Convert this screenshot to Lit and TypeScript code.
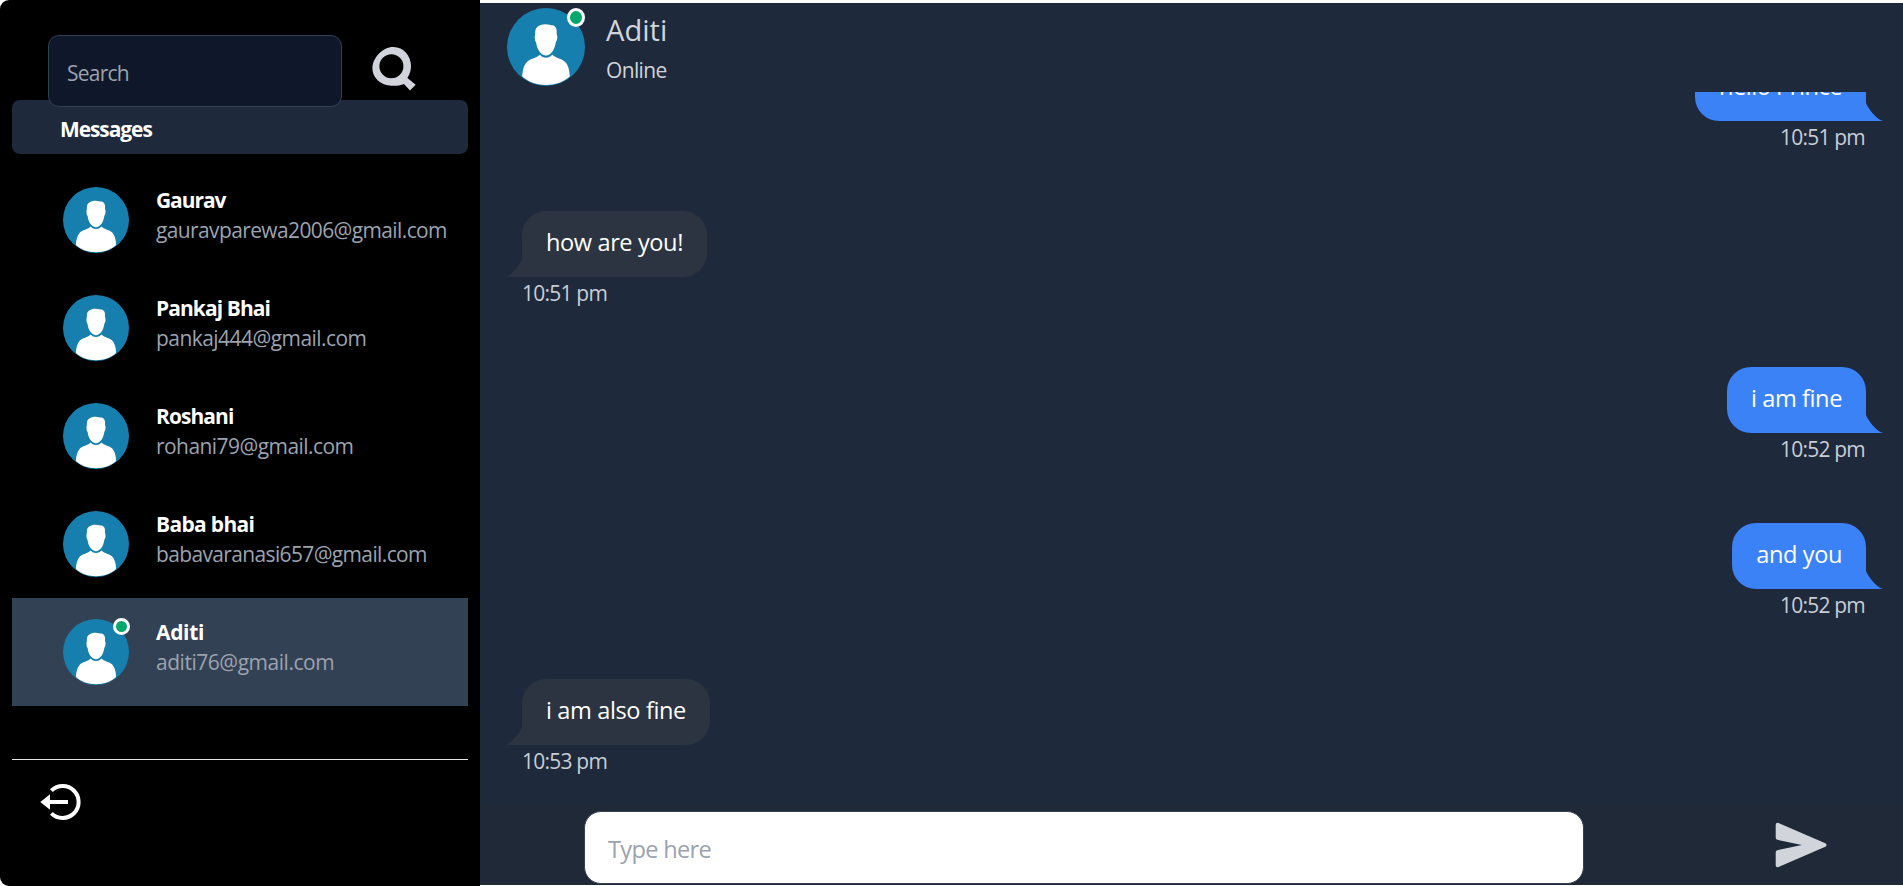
import { LitElement, html, css, svg, nothing } from 'lit';
import { customElement, property } from 'lit/decorators.js';
import { classMap } from 'lit/directives/class-map.js';
import { styleMap } from 'lit/directives/style-map.js';

interface Contact {
  name: string;
  email: string;
  nameTracking: number;
  emailTracking: number;
  online?: boolean;
}

interface Message {
  text: string;
  time: string;
  mine: boolean;
  tracking: number;
}

const contacts: Contact[] = [
  { name: 'Gaurav', email: 'gauravparewa2006@gmail.com', nameTracking: -1.04, emailTracking: -0.59 },
  { name: 'Pankaj Bhai', email: 'pankaj444@gmail.com', nameTracking: -0.9, emailTracking: -0.52 },
  { name: 'Roshani', email: 'rohani79@gmail.com', nameTracking: -0.9, emailTracking: -0.53 },
  { name: 'Baba bhai', email: 'babavaranasi657@gmail.com', nameTracking: -0.65, emailTracking: -0.61 },
  { name: 'Aditi', email: 'aditi76@gmail.com', nameTracking: -0.3, emailTracking: -0.44, online: true },
];

const messages: Message[] = [
  { text: 'hello Prince', time: '10:51 pm', mine: true, tracking: -0.48 },
  { text: 'how are you!', time: '10:51 pm', mine: false, tracking: -0.41 },
  { text: 'i am fine', time: '10:52 pm', mine: true, tracking: -0.42 },
  { text: 'and you', time: '10:52 pm', mine: true, tracking: -0.41 },
  { text: 'i am also fine', time: '10:53 pm', mine: false, tracking: -0.39 },
];

const tracked = (px: number) => styleMap({ letterSpacing: `${px}px` });

@customElement('user-avatar')
class UserAvatar extends LitElement {
  @property({ type: Boolean }) online = false;

  static styles = css`
    :host { display: block; position: relative; width: 66px; height: 66px; flex: none; }
    svg { display: block; width: 100%; height: 100%; }
    .dot {
      position: absolute; top: -1px; right: -1px; box-sizing: border-box;
      width: 17px; height: 17px; border: 3px solid #fff; border-radius: 50%; background: #05a76d;
    }
    :host(.large) { width: 78px; height: 78px; }
    :host(.large) .dot { top: 0; right: 0; width: 18px; height: 19px; }
  `;

  render() {
    return html`
      <svg viewBox="0 0 66 66">
        <circle cx="33" cy="33" r="33" fill="#177fad" />
        <path fill="#fff" d="M23.9 20.5C23.7 16 27.6 13.7 32.6 13.7C35.5 14 36.8 14.5 38.8 14.6C41.6 15.5 42.4 18 42 21.5C42.1 23.3 42.9 23.5 42.5 25.5C42.2 27.5 41.8 28 41.3 29C40.4 35.5 37 40.2 33 40.2C29 40.2 25.3 35.5 24.6 29C23.8 28 23.6 27 23.5 25.3C23.3 23.5 23.9 23 23.9 20.5Z" />
        <path fill="#fff" d="M27.8 39.6C29.2 41.4 31 42.1 33 42.1C35 42.1 36.8 41.4 38.3 39.6C42 43 46 42.6 49.2 45.6C52 48.4 52.9 53 53.1 58C47.5 62.8 40.5 65.2 33 65.2C25.5 65.2 18.5 62.8 12.9 58C13.1 53 14.2 48.4 16.9 45.6C20 42.6 24.2 43 27.8 39.6Z" />
      </svg>
      ${this.online ? html`<span class="dot"></span>` : nothing}
    `;
  }
}

@customElement('contact-row')
class ContactRow extends LitElement {
  @property({ attribute: false }) contact!: Contact;

  static styles = css`
    :host { display: flex; box-sizing: border-box; height: 108px; padding: 19px 0 0 51px; gap: 27px; white-space: nowrap; }
    :host(.active) { background: #334155; }
    user-avatar { margin-top: 2px; }
    .who { font-size: 20.95px; line-height: 30px; }
    .name { font-weight: 700; color: #fff; }
    .email { color: #9ca3af; }
  `;

  render() {
    const c = this.contact;
    return html`
      <user-avatar ?online=${c.online}></user-avatar>
      <div class="who">
        <div class="name" style=${tracked(c.nameTracking)}>${c.name}</div>
        <div class="email" style=${tracked(c.emailTracking)}>${c.email}</div>
      </div>
    `;
  }
}

@customElement('chat-message')
class ChatMessage extends LitElement {
  @property({ attribute: false }) message!: Message;

  static styles = css`
    :host { display: block; }
    .message { display: flex; flex-direction: column; align-items: flex-start; gap: 1px; white-space: nowrap; }
    .message.mine { align-items: flex-end; }
    .bubble {
      position: relative; box-sizing: border-box; height: 66px; padding: 0 24px; line-height: 62px;
      font-size: 23.6px; color: #fff; background: #2b3440; border-radius: 24px 24px 24px 0;
    }
    .mine .bubble { background: #3b82f6; border-radius: 24px 24px 0 24px; }
    .tail { position: absolute; bottom: 0; right: 100%; width: 17px; height: 18px; fill: #2b3440; }
    .mine .tail { right: auto; left: 100%; fill: #3b82f6; }
    .time { font-size: 20.95px; line-height: 30px; letter-spacing: -0.75px; color: #c9ced6; }
    .mine .time { padding-right: 1px; }
  `;

  render() {
    const m = this.message;
    const tail = m.mine
      ? svg`<path d="M-1 0H0C2.5 6 10 16 17 18H-1Z" />`
      : svg`<path d="M18 0H17C14.5 6 7 16 0 18H18Z" />`;
    return html`
      <div class=${classMap({ message: true, mine: m.mine })}>
        <div class="bubble" style=${tracked(m.tracking)}>
          ${m.text}<svg class="tail" viewBox="0 0 17 18">${tail}</svg>
        </div>
        <div class="time">${m.time}</div>
      </div>
    `;
  }
}

@customElement('app-root')
class AppRoot extends LitElement {
  static styles = css`
    :host {
      display: flex; width: 100%; height: 886px; overflow: hidden; background: #fff;
      font-family: 'Open Sans', 'Noto Sans', sans-serif;
    }
    * { box-sizing: border-box; }
    .sidebar {
      width: 480px; flex: none; background: #000; border-radius: 9px 0 0 9px; padding: 35px 12px 0;
      display: flex; flex-direction: column;
    }
    .search { display: flex; padding-left: 36px; gap: 29px; z-index: 1; }
    .search-input {
      width: 294px; height: 72px; border: 1px solid #334155; border-radius: 11px; background: #0f172a;
      padding: 3px 18px 0; font: 20.95px 'Open Sans', sans-serif; letter-spacing: -0.73px; outline: none;
    }
    input::placeholder { color: #9ca3af; opacity: 1; }
    .search-icon { width: 46px; height: 46px; margin-top: 11px; fill: #d1d5db; }
    .heading {
      height: 54px; margin-top: -7px; border-radius: 8px; background: #1e293b; padding: 3px 0 0 48px;
      font-size: 20.95px; line-height: 52px; font-weight: 700; letter-spacing: -1.05px; color: #fff;
    }
    .contacts { padding: 12px 0 53px; }
    .foot { border-top: 1px solid #e5e7eb; padding: 22px 0 0 27px; }
    .logout { display: block; width: 44px; height: 40px; }
    .chat { flex: 1; min-width: 0; height: 882px; margin-top: 3px; display: flex; flex-direction: column; background: #1e293b; }
    .head { height: 89px; flex: none; display: flex; gap: 21px; padding: 5px 0 0 27px; }
    .peer { padding-top: 4px; display: flex; flex-direction: column; gap: 7px; color: #d1d5db; }
    .peer-name { font-size: 29.1px; line-height: 36px; letter-spacing: 0.02px; }
    .peer-state { font-size: 20.95px; line-height: 30px; letter-spacing: -0.61px; }
    .log {
      height: 713px; flex: none; overflow: hidden; display: flex; flex-direction: column; justify-content: flex-end;
      gap: 59px; padding: 0 37px 29px 42px;
    }
    .composer { flex: 1; display: flex; background: #1f2937; padding: 6px 0 0 104px; gap: 190px; }
    .compose-input {
      width: 1000px; height: 73px; border: 1px solid #374151; border-radius: 17px; background: #fff;
      padding: 2px 23px 0; font: 23.6px 'Open Sans', sans-serif; letter-spacing: -0.7px; outline: none;
    }
    .send { width: 54px; height: 48px; margin-top: 10px; fill: #d1d5db; stroke: #d1d5db; }
  `;

  render() {
    return html`
      <aside class="sidebar">
        <div class="search">
          <input class="search-input" placeholder="Search" />
          <svg class="search-icon" viewBox="0 0 46 46">
            <path fill-rule="evenodd" d="M22.5 1C32.5 1.2 40 9.5 40 20C40 24.5 38.6 28.7 36.4 32L44.7 38.7L39 44.5L33 38C29.5 39.6 25 40 20.5 39.8C9.5 39.5 1.4 31.5 1.4 22.5C1.4 11.5 12 0.8 22.5 1ZM20.4 8.3A12 12 0 1 0 20.4 32.3A12 12 0 1 0 20.4 8.3Z" />
          </svg>
        </div>
        <div class="heading">Messages</div>
        <div class="contacts">
          ${contacts.map(
            (c) => html`<contact-row class=${classMap({ active: !!c.online })} .contact=${c}></contact-row>`,
          )}
        </div>
        <div class="foot">
          <svg class="logout" viewBox="0 0 44 40">
            <path d="M12.4 8.6A16 16 0 1 1 12.4 31.4" fill="none" stroke="#fff" stroke-width="4" />
            <path d="M1.3 20L11 12.3V18H29V22H11V27.7Z" fill="#fff" />
          </svg>
        </div>
      </aside>
      <main class="chat">
        <header class="head">
          <user-avatar class="large" online></user-avatar>
          <div class="peer">
            <div class="peer-name">Aditi</div>
            <div class="peer-state">Online</div>
          </div>
        </header>
        <section class="log">
          ${messages.map((m) => html`<chat-message .message=${m}></chat-message>`)}
        </section>
        <footer class="composer">
          <input class="compose-input" placeholder="Type here" />
          <svg class="send" viewBox="0 0 54 48">
            <path d="M3.7 3.8L50.5 24L3.7 44.2V31.2L29.5 25.6V22.4L3.7 16.8Z" stroke-width="4" stroke-linejoin="round" />
          </svg>
        </footer>
      </main>
    `;
  }
}
